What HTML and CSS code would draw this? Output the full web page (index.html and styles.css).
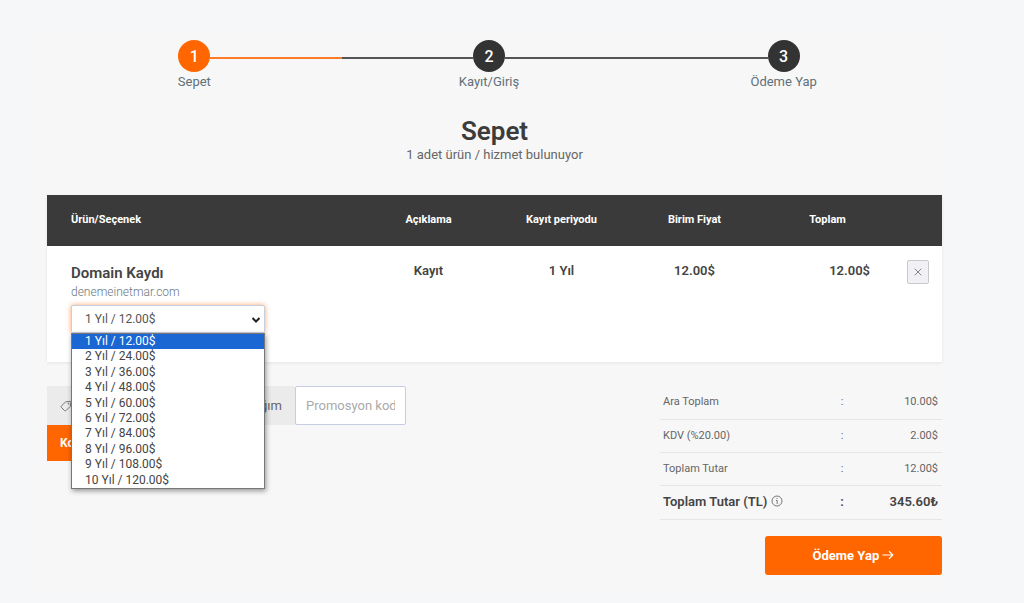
FILE: index.html
```html
<!doctype html>
<html lang="tr">
<head>
    <meta charset="utf-8">
    <meta name="viewport" content="width=device-width, initial-scale=1">
    <title>Sepet</title>
    <link rel="stylesheet" href="styles.css">
</head>
<body>

<main class="container">

    <ol class="steps">
        <li class="step active">
            <div class="step-track"><span class="line"></span><span class="step-no">1</span><span class="line"></span></div>
            <span class="step-name">Sepet</span>
        </li>
        <li class="step">
            <div class="step-track"><span class="line"></span><span class="step-no">2</span><span class="line"></span></div>
            <span class="step-name">Kayıt/Giriş</span>
        </li>
        <li class="step">
            <div class="step-track"><span class="line"></span><span class="step-no">3</span><span class="line"></span></div>
            <span class="step-name">Ödeme Yap</span>
        </li>
    </ol>

    <header class="page-title">
        <h1>Sepet</h1>
        <p>1 adet ürün / hizmet bulunuyor</p>
    </header>

    <table class="cart">
        <colgroup>
            <col>
            <col class="col-value">
            <col class="col-value">
            <col class="col-value">
            <col class="col-value">
            <col class="col-remove">
        </colgroup>
        <thead>
            <tr>
                <th class="product">Ürün/Seçenek</th>
                <th>Açıklama</th>
                <th>Kayıt periyodu</th>
                <th>Birim Fiyat</th>
                <th>Toplam</th>
                <th></th>
            </tr>
        </thead>
        <tbody>
            <tr>
                <td class="product">
                    <h2>Domain Kaydı</h2>
                    <p class="domain">denemeinetmar.com</p>
                    <div class="period">
                        <select class="period-select" aria-label="Kayıt periyodu">
                            <option>1 Yıl / 12.00$</option>
                            <option>2 Yıl / 24.00$</option>
                            <option>3 Yıl / 36.00$</option>
                            <option>4 Yıl / 48.00$</option>
                            <option>5 Yıl / 60.00$</option>
                            <option>6 Yıl / 72.00$</option>
                            <option>7 Yıl / 84.00$</option>
                            <option>8 Yıl / 96.00$</option>
                            <option>9 Yıl / 108.00$</option>
                            <option>10 Yıl / 120.00$</option>
                        </select>
                        <svg class="chevron" width="10" height="8" viewBox="0 0 10 8"><path d="M1.5 2 5 5.5 8.5 2" fill="none" stroke="#222" stroke-width="2"/></svg>
                        <ul class="period-list">
                            <li class="selected">1 Yıl / 12.00$</li>
                            <li>2 Yıl / 24.00$</li>
                            <li>3 Yıl / 36.00$</li>
                            <li>4 Yıl / 48.00$</li>
                            <li>5 Yıl / 60.00$</li>
                            <li>6 Yıl / 72.00$</li>
                            <li>7 Yıl / 84.00$</li>
                            <li>8 Yıl / 96.00$</li>
                            <li>9 Yıl / 108.00$</li>
                            <li>10 Yıl / 120.00$</li>
                        </ul>
                    </div>
                </td>
                <td>Kayıt</td>
                <td>1 Yıl</td>
                <td>12.00$</td>
                <td class="total">12.00$</td>
                <td class="remove">
                    <button type="button" class="btn-remove" aria-label="Sil">
                        <svg width="8" height="8" viewBox="0 0 8 8"><path d="M.7.7l6.6 6.6M7.3.7L.7 7.3" stroke="#85858c" stroke-width="1"/></svg>
                    </button>
                </td>
            </tr>
        </tbody>
    </table>

    <div class="bottom">
        <form class="promo">
            <label class="promo-label" for="promo">
                <svg width="12" height="12" viewBox="0 0 12 12" fill="none" stroke="#777" stroke-width="1"><path d="M5.6 1.9 10 1.3a.8.8 0 0 1 .9.9L10.3 6.3 6 10.6a1 1 0 0 1-1.4 0L1.3 7.4a1 1 0 0 1 0-1.4z"/><circle cx="8.5" cy="3.7" r=".5"/></svg>
                <span>Promosyon kodu kullanacağım</span>
            </label>
            <input class="promo-input" id="promo" type="text" placeholder="Promosyon kodu">
            <button type="button" class="btn-promo">Kodu Uygula</button>
        </form>

        <div class="summary">
            <table class="totals">
                <tr><th>Ara Toplam</th><td class="sep">:</td><td class="amount">10.00$</td></tr>
                <tr><th>KDV (%20.00)</th><td class="sep">:</td><td class="amount">2.00$</td></tr>
                <tr><th>Toplam Tutar</th><td class="sep">:</td><td class="amount">12.00$</td></tr>
                <tr class="grand">
                    <th>Toplam Tutar (TL)
                        <svg class="info" width="12" height="12" viewBox="0 0 12 12" fill="none" stroke="#777" stroke-width="1"><circle cx="6" cy="6" r="5"/><path d="M5 5.5h1.2V9M6 3v1.1"/></svg>
                    </th>
                    <td class="sep">:</td>
                    <td class="amount">345.60₺</td>
                </tr>
            </table>
            <button type="button" class="btn-pay">Ödeme Yap
                <svg width="12" height="10" viewBox="0 0 12 10" fill="none" stroke="#fff" stroke-width="1.2"><path d="M.5 5h10.3M7 1.2 10.800 5 7 8.8"/></svg>
            </button>
        </div>
    </div>

</main>

</body>
</html>
```
FILE: styles.css
```css
* {
    box-sizing: border-box;
}
body {
    margin: 0;
    background: #f5f7f9;
    color: #444;
    font-family: Roboto, "Liberation Sans", sans-serif;
    font-size: 13px;
    line-height: 18px;
}
h1, h2, p, ul, ol {
    margin: 0;
    padding: 0;
}
li {
    list-style: none;
}
button, input, select {
    font-family: inherit;
}
.container {
    margin: 32px 74px 0 37px;
    padding: 8px 8px 16px 10px;
    background: #f7f7f7;
}

/* steps */
.steps {
    display: grid;
    grid-template-columns: repeat(3, 1fr);
    padding-right: 11px;
}
.step {
    text-align: center;
    color: #607078;
}
.step-track {
    display: flex;
    align-items: center;
}
.line {
    flex: 1;
    height: 2px;
    margin-top: 4px;
    background: #555;
}
.step:first-child .line:first-child,
.step:last-child .line:last-child {
    visibility: hidden;
}
.step-no {
    width: 32px;
    height: 32px;
    border-radius: 50%;
    background: #333;
    color: #fff;
    font-size: 16px;
    font-weight: 500;
    line-height: 33px;
}
.active .step-no {
    background: #f60;
}
.active .line {
    background: #ff7b27;
}
.step-name {
    display: block;
    line-height: 20px;
}

/* title */
.page-title {
    padding: 24px 0 32px;
    text-align: center;
}
.page-title h1 {
    color: #3c3c3c;
    font-size: 26px;
    font-weight: 600;
    line-height: 30px;
}
.page-title p {
    color: #666;
    line-height: 17px;
}

/* cart table */
.cart {
    width: 100%;
    table-layout: fixed;
    border-collapse: collapse;
    background: #fff;
    box-shadow: 0 1px 3px rgba(0, 0, 0, .08);
}
.col-value {
    width: 133px;
}
.col-remove {
    width: 48px;
}
.cart th {
    height: 51px;
    padding: 0 0 2px;
    background: #3a3a3a;
    color: #fff;
    font-size: 11px;
    font-weight: 700;
}
.cart td {
    height: 116px;
    padding: 16px 0 0;
    vertical-align: top;
    text-align: center;
    font-weight: 600;
}
.cart .product {
    padding-left: 24px;
    text-align: left;
}
.cart .total {
    padding-right: 24px;
    text-align: right;
}
.cart .remove {
    padding-top: 14px;
}
.product h2 {
    font-size: 15px;
    font-weight: 600;
    line-height: 22px;
}
.domain {
    color: #6b7884;
    font-size: 12px;
    font-weight: 300;
    line-height: 16px;
}
.period {
    position: relative;
    width: 194px;
    margin-top: 5px;
    font-size: 12px;
    font-weight: 400;
}
.period-select {
    display: block;
    width: 100%;
    height: 28px;
    padding: 0 13px;
    border: 1px solid #c5cde0;
    border-radius: 2px;
    background: #fff;
    box-shadow: 0 0 5px rgba(255, 102, 0, .6);
    color: #555;
    font-size: 12px;
    appearance: none;
}
.chevron {
    position: absolute;
    top: 11px;
    right: 4px;
}
.period-list {
    position: absolute;
    z-index: 2;
    top: 100%;
    left: 0;
    display: grid;
    width: 100%;
    height: 156px;
    border: 1px solid #777;
    background: #fff;
    box-shadow: 1px 2px 5px rgba(0, 0, 0, .4);
    line-height: 15px;
}
.period-list li {
    padding-left: 13px;
}
.period-list .selected {
    background: #1a66d2;
    color: #fff;
}
.btn-remove {
    width: 22px;
    height: 24px;
    padding: 0;
    border: 1px solid #c9c9c9;
    border-radius: 2px;
    background: #f0f0f5;
    line-height: 8px;
}

/* promo + totals */
.bottom {
    display: flex;
    justify-content: space-between;
    align-items: flex-start;
    padding-top: 24px;
}
.promo {
    display: flex;
    flex-wrap: wrap;
    width: 45%;
}
.promo-label {
    display: flex;
    align-items: center;
    justify-content: space-between;
    width: 248px;
    height: 39px;
    padding: 0 13px;
    background: #ebebeb;
    color: #666;
}
.promo-input {
    width: 111px;
    height: 39px;
    padding: 0 10px;
    border: 1px solid #c5cde0;
    border-radius: 2px;
    background: #fff;
    font-size: 13px;
}
.promo-input::placeholder {
    color: #aaa;
}
.btn-promo {
    height: 36px;
    padding: 0 13px;
    border: 0;
    background: #f60;
    color: #fff;
    font-size: 12px;
    font-weight: 700;
}
.summary {
    width: 282px;
}
.totals {
    width: 100%;
    border-collapse: collapse;
    color: #666;
    font-size: 11px;
}
.totals th,
.totals td {
    height: 33px;
    padding: 0 4px;
    border-bottom: 1px solid #e6e6e6;
    font-weight: 400;
    text-align: right;
}
.totals th {
    padding-left: 3px;
    text-align: left;
}
.totals .sep {
    width: 32px;
    text-align: center;
}
.totals .amount {
    width: 84px;
}
.totals .grand th,
.totals .grand td {
    height: 34px;
    color: #444;
    font-size: 13px;
    font-weight: 600;
}
.info {
    vertical-align: -1px;
}
.btn-pay {
    display: block;
    width: 177px;
    height: 39px;
    margin: 16px 0 0 auto;
    border: 0;
    border-radius: 3px;
    background: #f60;
    color: #fff;
    font-size: 13px;
    font-weight: 700;
}
```
